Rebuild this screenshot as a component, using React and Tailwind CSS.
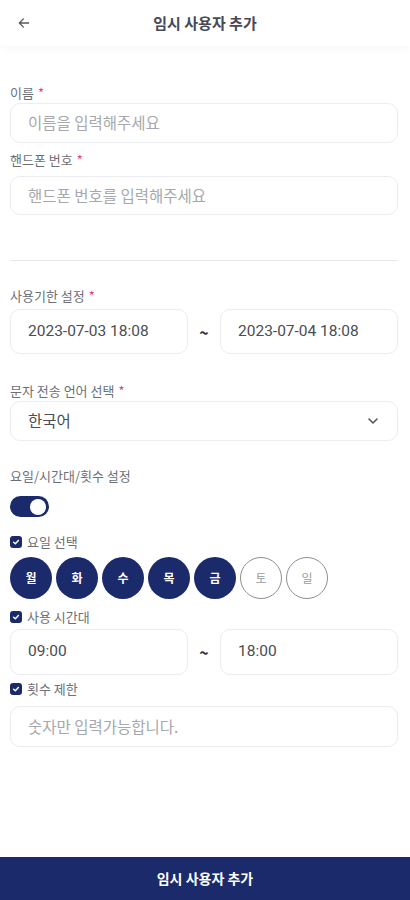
import { useState } from 'react';

const font = { fontFamily: '"Noto Sans CJK KR", "Noto Sans", sans-serif' };
const num = { fontFamily: 'Roboto, "Noto Sans CJK KR", sans-serif' };

function Label({ children, required }) {
    return (
        <div className="text-[13px] leading-[16px] text-[#6d7076]">
            {children}
            {required && <span className="ml-1 text-[#e0457b]">*</span>}
        </div>
    );
}

function CheckLabel({ children }) {
    return (
        <div className="flex items-center gap-[5px] text-[13px] leading-[16px] text-[#6d7076]">
            <span className="flex h-[12px] w-[12px] items-center justify-center rounded-[3px] bg-[#1b2a6b]">
                <svg width="8" height="8" viewBox="0 0 10 10" fill="none">
                    <path d="M2 5.2 4.2 7.3 8 3" stroke="white" strokeWidth="1.8" strokeLinecap="round" strokeLinejoin="round" />
                </svg>
            </span>
            {children}
        </div>
    );
}

function Box({ children, className = '', style }) {
    return (
        <div style={style} className={`flex items-center rounded-[10px] border border-[#ebecef] bg-white pl-[17px] text-[15.5px] ${className}`}>
            {children}
        </div>
    );
}

export default function App() {
    const [enabled] = useState(true);
    const days = [
        { d: '월', on: true },
        { d: '화', on: true },
        { d: '수', on: true },
        { d: '목', on: true },
        { d: '금', on: true },
        { d: '토', on: false },
        { d: '일', on: false },
    ];

    return (
        <div className="flex h-[900px] w-[410px] flex-col bg-white" style={font}>
            {/* Header */}
            <div className="relative flex h-[46px] items-center justify-center shadow-[0_4px_8px_rgba(0,0,0,0.025)]">
                <svg className="absolute left-[17px] top-[16px]" width="14" height="14" viewBox="0 0 24 24" fill="none" stroke="#55585e" strokeWidth="2.2" strokeLinecap="round" strokeLinejoin="round">
                    <path d="M20 12H4M11 5l-7 7 7 7" />
                </svg>
                <span className="text-[15px] font-semibold text-[#464a58]">임시 사용자 추가</span>
            </div>

            <div className="px-[10px] pr-[12px]">
                <div className="mt-[39px]">
                    <Label required>이름</Label>
                    <Box className="mt-[2px] h-[40px] text-[#a6a8ad]">이름을 입력해주세요</Box>
                </div>
                <div className="mt-[9px]">
                    <Label required>핸드폰 번호</Label>
                    <Box className="mt-[8px] h-[39px] text-[#a6a8ad]">핸드폰 번호를 입력해주세요</Box>
                </div>

                <div className="mt-[45px] h-px bg-[#e6e7ea]" />

                <div className="mt-[27px]">
                    <Label required>사용기한 설정</Label>
                    <div className="mt-[5px] flex items-center">
                        <Box style={num} className="h-[45px] w-[178px] text-[#4a4d53]">2023-07-03 18:08</Box>
                        <span className="flex-1 text-center text-[16px] font-bold text-[#333]">~</span>
                        <Box style={num} className="h-[45px] w-[178px] text-[#4a4d53]">2023-07-04 18:08</Box>
                    </div>
                </div>

                <div className="mt-[29px]">
                    <Label required>문자 전송 언어 선택</Label>
                    <Box className="mt-[2px] h-[40px] justify-between pr-[16px] text-[#4a4d53]">
                        한국어
                        <svg width="16" height="16" viewBox="0 0 24 24" fill="none" stroke="#555" strokeWidth="2.4" strokeLinecap="round" strokeLinejoin="round">
                            <path d="M6 9l6 6 6-6" />
                        </svg>
                    </Box>
                </div>

                <div className="mt-[27px]">
                    <Label>요일/시간대/횟수 설정</Label>
                    <div className={`mt-[12px] flex h-[21px] w-[39px] items-center rounded-full px-[3px] ${enabled ? 'justify-end bg-[#1b2a6b]' : 'bg-gray-300'}`}>
                        <span className="h-[16px] w-[16px] rounded-full bg-white" />
                    </div>
                </div>

                <div className="mt-[17px]">
                    <CheckLabel>요일 선택</CheckLabel>
                    <div className="mt-[7px] flex gap-[4px]">
                        {days.map((x) =>
                            x.on ? (
                                <span key={x.d} className="flex h-[42px] w-[42px] items-center justify-center rounded-full bg-[#1b2a6b] text-[12px] font-bold text-white">
                                    {x.d}
                                </span>
                            ) : (
                                <span key={x.d} className="flex h-[42px] w-[42px] items-center justify-center rounded-full border border-[#8d8f94] text-[12px] text-[#9a9ca1]">
                                    {x.d}
                                </span>
                            )
                        )}
                    </div>
                </div>

                <div className="mt-[10px]">
                    <CheckLabel>사용 시간대</CheckLabel>
                    <div className="mt-[4px] flex items-center">
                        <Box style={num} className="h-[46px] w-[178px] text-[#4a4d53]">09:00</Box>
                        <span className="flex-1 text-center text-[16px] font-bold text-[#333]">~</span>
                        <Box style={num} className="h-[46px] w-[178px] text-[#4a4d53]">18:00</Box>
                    </div>
                </div>

                <div className="mt-[6px]">
                    <CheckLabel>횟수 제한</CheckLabel>
                    <Box className="mt-[9px] h-[41px] text-[#a6a8ad]">숫자만 입력가능합니다.</Box>
                </div>
            </div>

            <button className="mt-auto flex h-[43px] w-full items-center justify-center bg-[#1b2a6b] text-[14px] font-bold text-white">
                임시 사용자 추가
            </button>
        </div>
    );
}
